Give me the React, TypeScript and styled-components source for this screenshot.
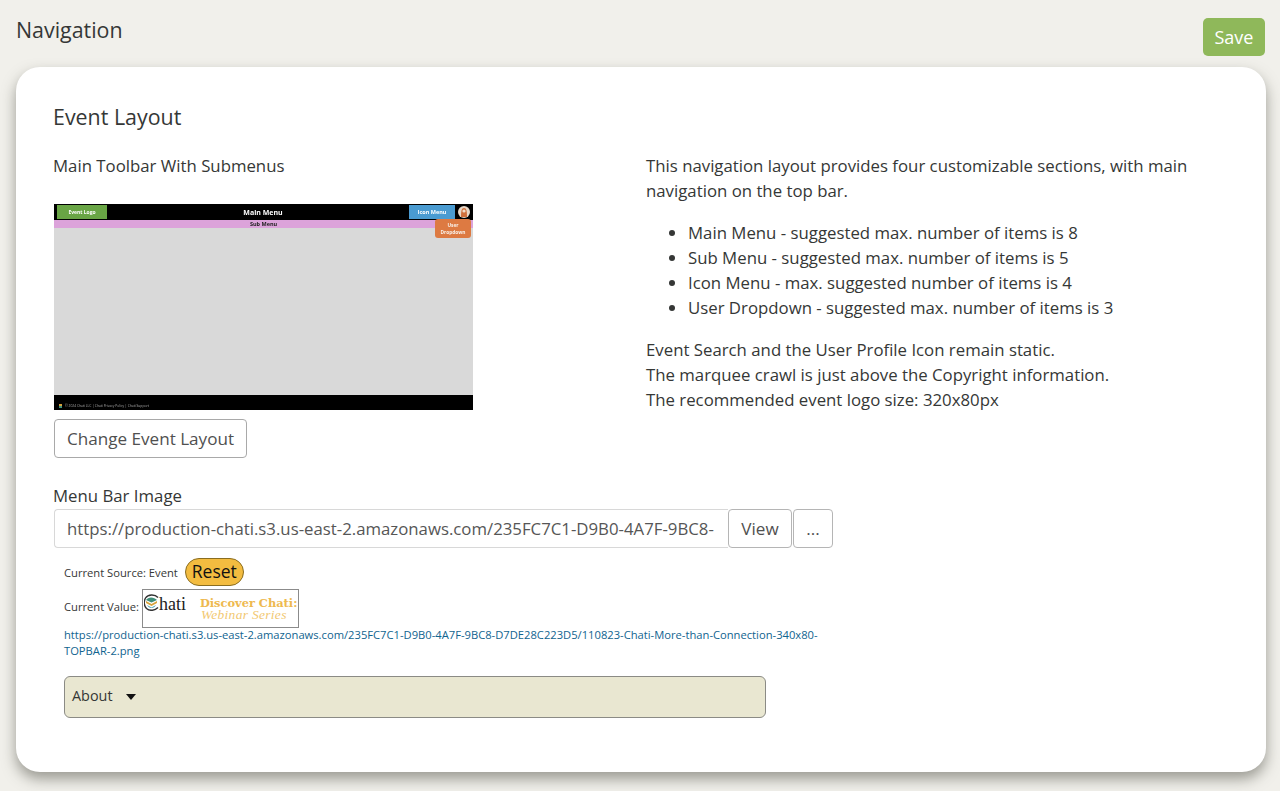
import React from "react";
import styled, { createGlobalStyle } from "styled-components";

const GlobalStyle = createGlobalStyle`
  html, body {
    margin: 0;
    padding: 0;
    background: #f1f0eb;
    font-family: "Open Sans", "Liberation Sans", sans-serif;
    color: #353736;
  }
`;

const Page = styled.div`
  width: 1280px;
  height: 791px;
  box-sizing: border-box;
  padding: 18px 14px 0 16px;
  overflow: hidden;
`;

const Header = styled.header`
  display: flex;
  justify-content: space-between;
  align-items: flex-start;
  height: 49px;
`;

const PageTitle = styled.h1`
  margin: 0;
  font-size: 21.4px;
  font-weight: 500;
  line-height: 24px;
`;

const SaveButton = styled.button`
  width: 62px;
  height: 38px;
  margin-right: 1px;
  border: none;
  border-radius: 5px;
  background: #8fb85a;
  color: #fff;
  font: 500 18px "Open Sans", sans-serif;
`;

const Card = styled.main`
  width: 1250px;
  height: 705px;
  box-sizing: border-box;
  padding: 34px 37px 0;
  background: #fff;
  border-radius: 24px;
  box-shadow: 0 7px 14px rgba(70, 70, 60, 0.5);
`;

const SectionTitle = styled.h2`
  margin: 0 0 20px;
  font-size: 21.4px;
  font-weight: 500;
  line-height: 32px;
`;

const Columns = styled.div`
  display: grid;
  grid-template-columns: 593px 1fr;
`;

const Subtitle = styled.div`
  font-size: 16.8px;
  line-height: 25px;
`;

const Preview = styled.div`
  display: flex;
  flex-direction: column;
  width: 419px;
  height: 206px;
  margin: 26px 0 9px 1px;
  position: relative;
  background: #d9d9d9;
  filter: blur(0.25px);
`;

const PreviewTop = styled.div`
  display: flex;
  align-items: center;
  height: 16px;
  box-sizing: border-box;
  padding: 0 2px 0 3px;
  background: #000;
  color: #fff;
`;

const PreviewLogo = styled.div`
  width: 50px;
  height: 14px;
  background: #69a545;
  font-size: 5px;
  font-weight: 700;
  line-height: 14px;
  text-align: center;
`;

const PreviewMain = styled.div`
  flex: 1;
  padding-left: 10px;
  font-size: 7px;
  font-weight: 700;
  text-align: center;
`;

const PreviewIcons = styled.div`
  width: 46px;
  height: 14px;
  background: #4a9bd1;
  font-size: 5.5px;
  font-weight: 700;
  line-height: 14px;
  text-align: center;
`;

const PreviewAvatar = styled.svg`
  width: 12px;
  height: 12px;
  margin: 0 1px 0 3px;
`;

const PreviewSub = styled.div`
  height: 8px;
  background: #dca3da;
  color: #222;
  font-size: 5.5px;
  font-weight: 700;
  line-height: 8px;
  text-align: center;
`;

const PreviewBody = styled.div`
  flex: 1;
`;

const PreviewDropdown = styled.div`
  position: absolute;
  top: 15px;
  right: 2px;
  width: 36px;
  height: 19px;
  background: #dd7a42;
  border-radius: 3px;
  color: #f8f0e8;
  font-size: 4.8px;
  font-weight: 700;
  line-height: 7px;
  text-align: center;
  padding-top: 3px;
  box-sizing: border-box;
`;

const PreviewFooter = styled.div`
  display: flex;
  align-items: flex-end;
  gap: 3px;
  height: 15px;
  box-sizing: border-box;
  padding: 0 0 2px 5px;
  background: #000;
  color: #aaa;
  font-size: 3.3px;
  line-height: 5px;
`;

const PreviewFooterMark = styled.span`
  width: 3px;
  height: 4px;
  background: linear-gradient(#d8a23a 50%, #3f8f7a 50%);
`;

const OutlineButton = styled.button`
  display: block;
  width: 193px;
  height: 39px;
  margin-left: 1px;
  padding: 0;
  background: #fff;
  border: 1px solid #a9a9a9;
  border-radius: 4px;
  color: #505050;
  font: 500 17.1px "Open Sans", sans-serif;
`;

const Paragraph = styled.p`
  margin: 0;
  font-size: 16.8px;
  line-height: 25px;
`;

const Bullets = styled.ul`
  margin: 17px 0 17px;
  padding: 0 0 0 42px;
  font-size: 16.8px;
  line-height: 25px;
`;

const FieldLabel = styled.div`
  margin-top: 25px;
  font-size: 16.8px;
  line-height: 26px;
`;

const FieldRow = styled.div`
  display: flex;
  margin-left: 1px;
  height: 39px;
`;

const UrlInput = styled.input`
  width: 674px;
  box-sizing: border-box;
  padding: 0 14px 0 12px;
  border: 1px solid #d8d8d8;
  border-right: none;
  border-radius: 4px 0 0 4px;
  color: #565656;
  font: 400 16.8px "Open Sans", sans-serif;
  outline: none;
`;

const FieldButton = styled.button<{ $width: number }>`
  width: ${(p) => p.$width}px;
  padding: 0;
  margin-right: 1px;
  background: #fff;
  border: 1px solid #b5b5b5;
  border-radius: 4px;
  color: #505050;
  font: 500 17.1px "Open Sans", sans-serif;
`;

const Details = styled.div`
  margin-left: 11px;
  width: 770px;
`;

const SourceRow = styled.div`
  display: flex;
  align-items: center;
  gap: 7px;
  height: 28px;
  margin-top: 10px;
  font-size: 11.2px;
`;

const ResetButton = styled.button`
  width: 59px;
  height: 28px;
  padding: 0 0 2px;
  background: #f3bc40;
  border: 1px solid #8a6d20;
  border-radius: 14px;
  color: #111;
  font: 400 17.5px "Open Sans", sans-serif;
`;

const ValueRow = styled.div`
  display: flex;
  align-items: center;
  gap: 3px;
  height: 39px;
  margin-top: 3px;
  font-size: 11.2px;
`;

const ValueLabel = styled.span`
  padding-bottom: 5px;
`;

const Banner = styled.div`
  display: flex;
  width: 157px;
  height: 39px;
  box-sizing: border-box;
  border: 1px solid #8b8b8b;
  background: #fff;
`;

const BannerLogo = styled.div`
  display: flex;
  align-items: flex-start;
  width: 56px;
  padding: 4px 0 0 1px;
  color: #222;
  font: 400 18px/20px "Liberation Serif", serif;
`;

const BannerText = styled.div`
  display: flex;
  flex-direction: column;
  color: #eeb94f;
  padding-top: 8px;
`;

const BannerHeading = styled.span`
  font: 700 11.4px/11px "DejaVu Serif", serif;
  white-space: nowrap;
`;

const BannerSub = styled.span`
  padding-left: 1px;
  font: italic 400 13.5px/12px "Liberation Serif", serif;
  letter-spacing: 0.3px;
  color: #f2c871;
  white-space: nowrap;
`;

const UrlLink = styled.a`
  display: block;
  margin-top: -1px;
  color: #11648f;
  font-size: 11.2px;
  line-height: 16px;
  text-decoration: none;
  white-space: nowrap;
`;

const AccordionBar = styled.div`
  display: flex;
  align-items: center;
  width: 702px;
  height: 42px;
  margin-top: 17px;
  box-sizing: border-box;
  padding: 0 0 4px 7px;
  background: #e9e7d1;
  border: 1px solid #8b8b85;
  border-radius: 6px;
  font-size: 14.4px;
`;

const Caret = styled.span`
  width: 0;
  height: 0;
  margin: 4px 0 0 13px;
  border-left: 5.5px solid transparent;
  border-right: 5.5px solid transparent;
  border-top: 6px solid #111;
`;

const App: React.FC = () => {
  return (
    <Page>
      <GlobalStyle />
      <Header>
        <PageTitle>Navigation</PageTitle>
        <SaveButton>Save</SaveButton>
      </Header>
      <Card>
        <SectionTitle>Event Layout</SectionTitle>
        <Columns>
          <div>
            <Subtitle>Main Toolbar With Submenus</Subtitle>
            <Preview>
              <PreviewTop>
                <PreviewLogo>Event Logo</PreviewLogo>
                <PreviewMain>Main Menu</PreviewMain>
                <PreviewIcons>Icon Menu</PreviewIcons>
                <PreviewAvatar viewBox="0 0 12 12">
                  <circle cx="6" cy="6" r="6" fill="#e8d8c8" />
                  <path d="M3 11 C3 5 3.5 2 6 2 C8.5 2 9 5 9 11 Z" fill="#d0703c" />
                  <circle cx="6" cy="5" r="1.6" fill="#f4dcc8" />
                </PreviewAvatar>
              </PreviewTop>
              <PreviewSub>Sub Menu</PreviewSub>
              <PreviewBody />
              <PreviewFooter>
                <PreviewFooterMark />
                <span>© 2024 Chati LLC | Chati Privacy Policy | Chati Support</span>
              </PreviewFooter>
              <PreviewDropdown>
                User
                <br />
                Dropdown
              </PreviewDropdown>
            </Preview>
            <OutlineButton>Change Event Layout</OutlineButton>
          </div>
          <div>
            <Paragraph>
              This navigation layout provides four customizable sections, with main
              <br />
              navigation on the top bar.
            </Paragraph>
            <Bullets>
              <li>Main Menu - suggested max. number of items is 8</li>
              <li>Sub Menu - suggested max. number of items is 5</li>
              <li>Icon Menu - max. suggested number of items is 4</li>
              <li>User Dropdown - suggested max. number of items is 3</li>
            </Bullets>
            <Paragraph>
              Event Search and the User Profile Icon remain static.
              <br />
              The marquee crawl is just above the Copyright information.
              <br />
              The recommended event logo size: 320x80px
            </Paragraph>
          </div>
        </Columns>
        <FieldLabel>Menu Bar Image</FieldLabel>
        <FieldRow>
          <UrlInput
            readOnly
            value="https://production-chati.s3.us-east-2.amazonaws.com/235FC7C1-D9B0-4A7F-9BC8-D7DE28C223D5/110823-Chati-More-than-Connection-340x80-TOPBAR-2.png"
          />
          <FieldButton $width={64}>View</FieldButton>
          <FieldButton $width={40}>...</FieldButton>
        </FieldRow>
        <Details>
          <SourceRow>
            <span>Current Source: Event</span>
            <ResetButton>Reset</ResetButton>
          </SourceRow>
          <ValueRow>
            <ValueLabel>Current Value:</ValueLabel>
            <Banner>
              <BannerLogo>
                <svg width="15" height="17" viewBox="0 0 15 17">
                  <path d="M14 3.5 C11 0 4 0 1.5 4 C-0.5 7.5 0 12 2.5 14.5 C6 17.5 11 16.5 14 13.5" fill="none" stroke="#333" strokeWidth="1.4" />
                  <path d="M2 6 C4 2.5 10 2.5 13 6 L7.5 8.5 Z" fill="#3f8f7a" />
                  <path d="M2 7 L7.5 10 L13 7 L13 9 L7.5 12 L2 9 Z" fill="#d8a23a" />
                  <path d="M3 11 L7.5 13.5 L12 11 C10 15 5 15 3 11 Z" fill="#4aa0b0" />
                </svg>
                <span>hati</span>
              </BannerLogo>
              <BannerText>
                <BannerHeading>Discover Chati:</BannerHeading>
                <BannerSub>Webinar Series</BannerSub>
              </BannerText>
            </Banner>
          </ValueRow>
          <UrlLink href="#">
            https://production-chati.s3.us-east-2.amazonaws.com/235FC7C1-D9B0-4A7F-9BC8-D7DE28C223D5/110823-Chati-More-than-Connection-340x80-
            <br />
            TOPBAR-2.png
          </UrlLink>
          <AccordionBar>
            About
            <Caret />
          </AccordionBar>
        </Details>
      </Card>
    </Page>
  );
};

export default App;
